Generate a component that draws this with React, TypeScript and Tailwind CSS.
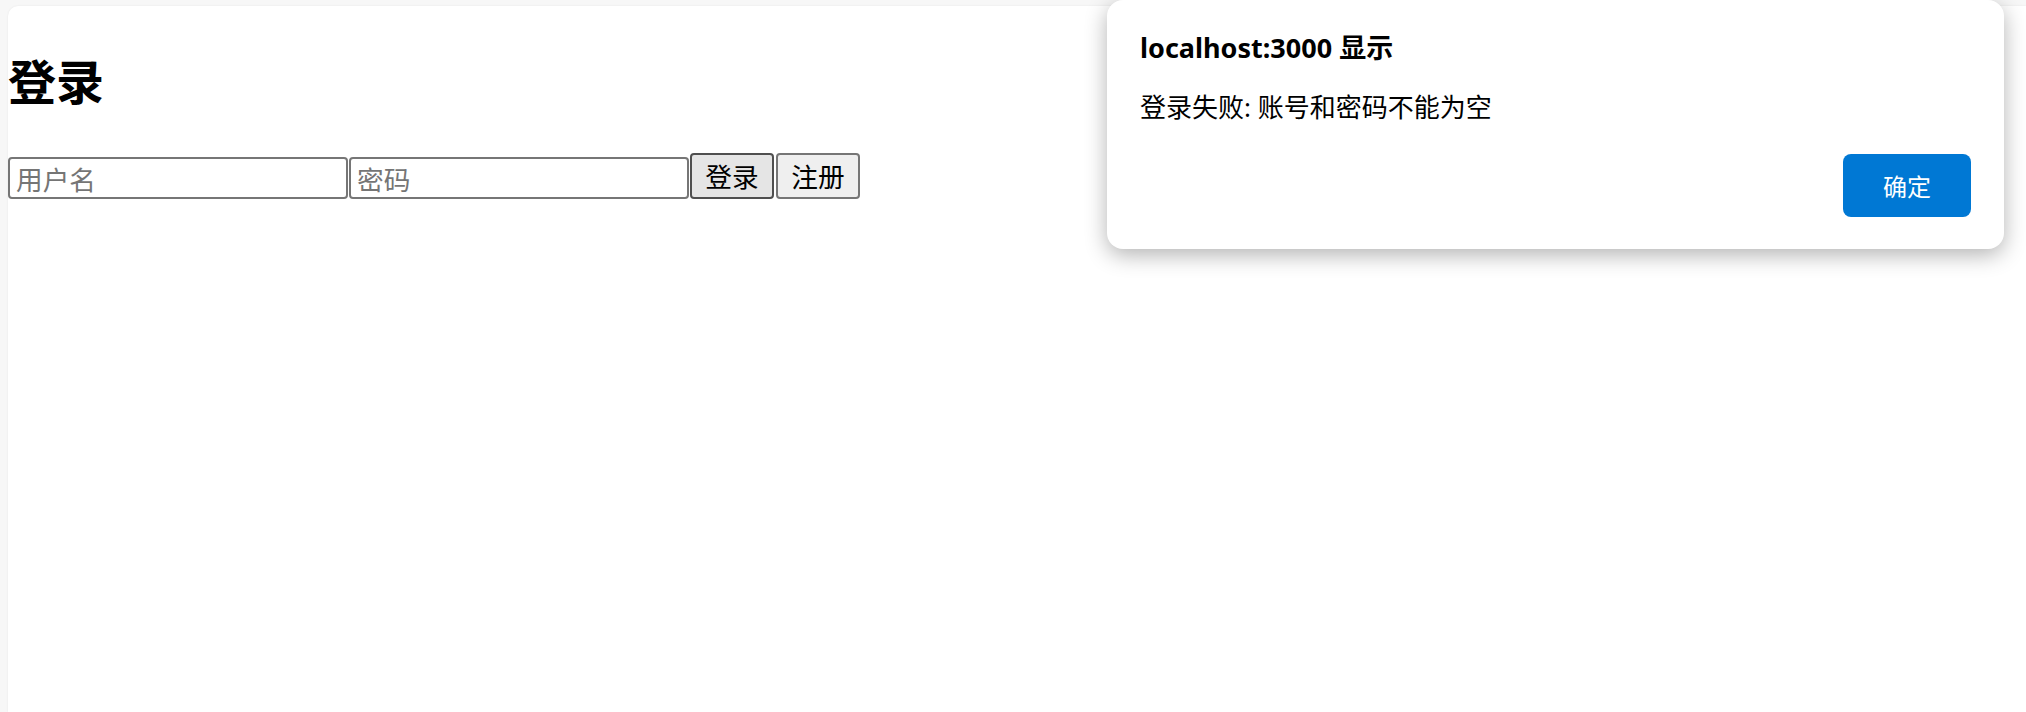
import React from "react";

export default function App() {
  return (
    <div className="relative h-[712px] w-[2026px] overflow-hidden bg-[#f7f7f7] pl-[8px] pt-[6px] font-['Noto_Sans_CJK_SC','Noto_Sans',sans-serif]">
      <div className="h-full w-full rounded-tl-[10px] bg-white shadow-[0_0_2px_rgba(0,0,0,0.08)]">
        <h1 className="pt-[49px] text-[48px] font-bold leading-[48px] text-black">登录</h1>
        <div className="mt-[50px] flex items-end">
          <input
            placeholder="用户名"
            className="h-[42px] w-[340px] rounded-[4px] border-2 border-[#767676] bg-white px-[6px] font-['Noto_Sans_CJK_SC',sans-serif] text-[26.67px] text-black outline-none placeholder:text-[#757575]"
          />
          <input
            placeholder="密码"
            className="ml-[1px] h-[42px] w-[340px] rounded-[4px] border-2 border-[#767676] bg-white px-[6px] font-['Noto_Sans_CJK_SC',sans-serif] text-[26.67px] text-black outline-none placeholder:text-[#757575]"
          />
          <button className="ml-[1px] flex h-[46px] w-[84px] items-center justify-center rounded-[4px] border-2 border-[#4f4f4f] bg-[#e5e5e5] font-['Noto_Sans_CJK_SC',sans-serif] text-[26.67px] leading-none text-black">
            登录
          </button>
          <button className="ml-[2px] flex h-[46px] w-[84px] items-center justify-center rounded-[4px] border-2 border-[#767676] bg-[#efefef] font-['Noto_Sans_CJK_SC',sans-serif] text-[26.67px] leading-none text-black">
            注册
          </button>
        </div>
      </div>

      <div className="absolute left-[1107px] top-0 flex h-[249px] w-[897px] flex-col rounded-[16px] bg-white px-[33px] pb-[32px] pt-[30px] font-['Noto_Sans','Noto_Sans_CJK_SC',sans-serif] shadow-[0_6px_22px_rgba(0,0,0,0.3)]">
        <div className="text-[27px] font-bold leading-[36px] text-black">localhost:3000 显示</div>
        <div className="mt-[23px] text-[26px] leading-[36px] text-black">
          登录失败: 账号和密码不能为空
        </div>
        <div className="mt-auto flex justify-end">
          <button className="flex h-[63px] w-[128px] items-center justify-center rounded-[8px] bg-[#0078d4] font-['Noto_Sans_CJK_SC',sans-serif] text-[24px] text-white">
            确定
          </button>
        </div>
      </div>
    </div>
  );
}
